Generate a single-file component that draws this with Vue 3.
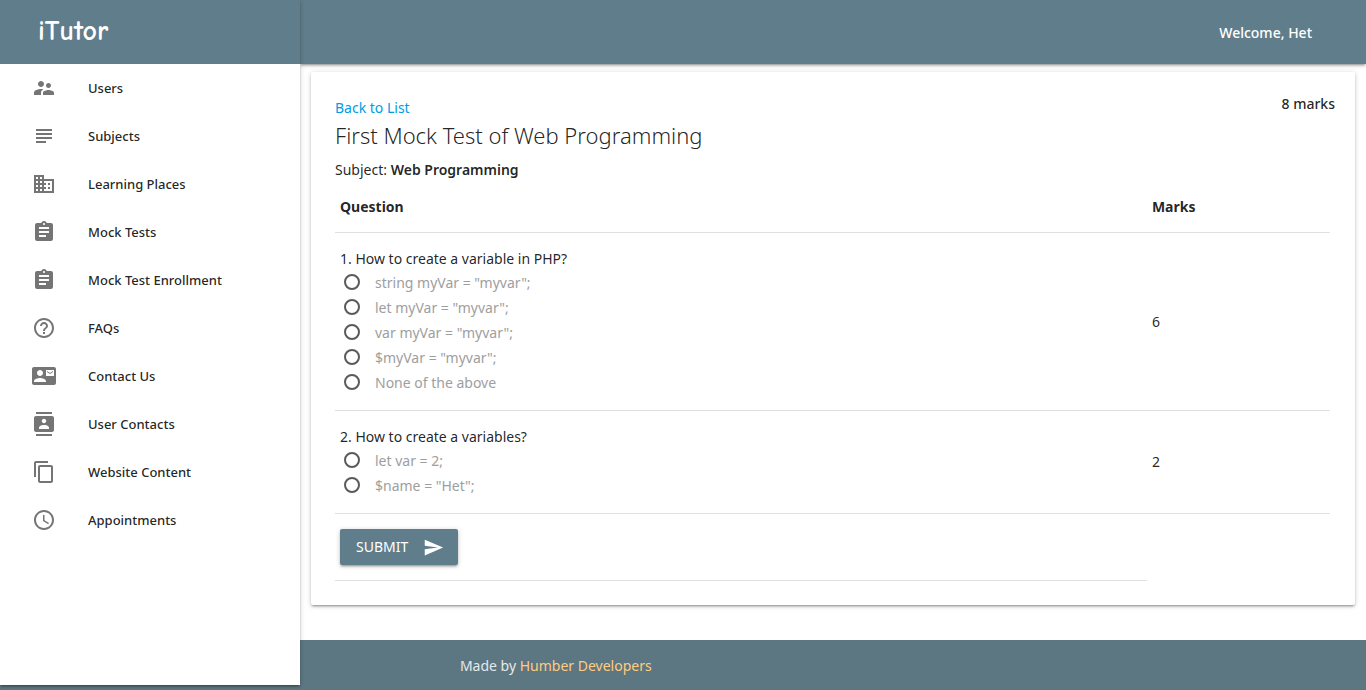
<script setup>
import { ref } from 'vue'

const clipboard =
  'M19 3h-4.18C14.4 1.84 13.3 1 12 1c-1.3 0-2.4.84-2.82 2H5c-1.1 0-2 .9-2 2v14c0 1.1.9 2 2 2h14c1.1 0 2-.9 2-2V5c0-1.1-.9-2-2-2zm-7 0c.55 0 1 .45 1 1s-.45 1-1 1-1-.45-1-1 .45-1 1-1zm2 14H7v-2h7v2zm3-4H7v-2h10v2zm0-4H7V7h10v2z'

const menu = [
  { label: 'Users', icon: 'M16.5 12c1.38 0 2.49-1.12 2.49-2.5S17.88 7 16.5 7C15.12 7 14 8.12 14 9.5s1.12 2.5 2.5 2.5zM9 11c1.66 0 2.99-1.34 2.99-3S10.66 5 9 5C7.34 5 6 6.34 6 8s1.34 3 3 3zm7.5 3c-1.83 0-5.5.92-5.5 2.75V19h11v-2.25c0-1.83-3.67-2.75-5.5-2.75zM9 13c-2.33 0-7 1.17-7 3.5V19h7v-2.25c0-.85.33-2.34 2.37-3.47C10.5 13.1 9.66 13 9 13z' },
  { label: 'Subjects', icon: 'M14 17H4v2h10v-2zm6-8H4v2h16V9zM4 15h16v-2H4v2zM4 5v2h16V5H4z' },
  { label: 'Learning Places', icon: 'M12 7V3H2v18h20V7H12zM6 19H4v-2h2v2zm0-4H4v-2h2v2zm0-4H4V9h2v2zm0-4H4V5h2v2zm4 12H8v-2h2v2zm0-4H8v-2h2v2zm0-4H8V9h2v2zm0-4H8V5h2v2zm10 12h-8v-2h2v-2h-2v-2h2v-2h-2V9h8v10zm-2-8h-2v2h2v-2zm0 4h-2v2h2v-2z' },
  { label: 'Mock Tests', icon: clipboard },
  { label: 'Mock Test Enrollment', icon: clipboard },
  { label: 'FAQs', icon: 'M11 18h2v-2h-2v2zm1-16C6.48 2 2 6.48 2 12s4.48 10 10 10 10-4.48 10-10S17.52 2 12 2zm0 18c-4.41 0-8-3.59-8-8s3.59-8 8-8 8 3.59 8 8-3.59 8-8 8zm0-14c-2.21 0-4 1.79-4 4h2c0-1.1.9-2 2-2s2 .9 2 2c0 2-3 1.75-3 5h2c0-2.25 3-2.5 3-5 0-2.21-1.79-4-4-4z' },
  { label: 'Contact Us', icon: 'M21 8V7l-3 2-3-2v1l3 2 3-2zm1-5H2C.9 3 0 3.9 0 5v14c0 1.1.9 2 2 2h20c1.1 0 1.99-.9 1.99-2L24 5c0-1.1-.9-2-2-2zM8 6c1.66 0 3 1.34 3 3s-1.34 3-3 3-3-1.34-3-3 1.34-3 3-3zm6 12H2v-1c0-2 4-3.1 6-3.1s6 1.1 6 3.1v1zm8-6h-8V6h8v6z' },
  { label: 'User Contacts', icon: 'M20 0H4v2h16V0zM4 24h16v-2H4v2zM20 4H4c-1.1 0-2 .9-2 2v12c0 1.1.9 2 2 2h16c1.1 0 2-.9 2-2V6c0-1.1-.9-2-2-2zm-8 2.75c1.24 0 2.25 1.01 2.25 2.25s-1.01 2.25-2.25 2.25S9.75 10.24 9.75 9 10.76 6.75 12 6.75zM17 17H7v-1.5c0-1.67 3.33-2.5 5-2.5s5 .83 5 2.5V17z' },
  { label: 'Website Content', icon: 'M16 1H4c-1.1 0-2 .9-2 2v14h2V3h12V1zm3 4H8c-1.1 0-2 .9-2 2v14c0 1.1.9 2 2 2h11c1.1 0 2-.9 2-2V7c0-1.1-.9-2-2-2zm0 16H8V7h11v14z' },
  { label: 'Appointments', icon: 'M11.99 2C6.47 2 2 6.48 2 12s4.47 10 9.99 10C17.52 22 22 17.52 22 12S17.52 2 11.99 2zM12 20c-4.42 0-8-3.58-8-8s3.58-8 8-8 8 3.58 8 8-3.58 8-8 8zm.5-13H11v6l5.25 3.15.75-1.23-4.5-2.67z' },
]

const questions = [
  {
    text: 'How to create a variable in PHP?',
    marks: 6,
    options: ['string myVar = "myvar";', 'let myVar = "myvar";', 'var myVar = "myvar";', '$myVar = "myvar";', 'None of the above'],
  },
  { text: 'How to create a variables?', marks: 2, options: ['let var = 2;', '$name = "Het";'] },
]

const answers = ref([null, null])
</script>

<template>
  <div class="app">
    <aside class="sidebar">
      <div class="brand"><a href="#" class="logo">iTutor</a></div>
      <nav>
        <a v-for="item in menu" :key="item.label" href="#" class="nav-item">
          <svg class="nav-icon" viewBox="0 0 24 24" aria-hidden="true"><path :d="item.icon" /></svg>
          <span>{{ item.label }}</span>
        </a>
      </nav>
    </aside>

    <div class="page">
      <header class="topbar"><span>Welcome, Het</span></header>

      <main class="content">
        <form class="card" @submit.prevent>
          <div class="card-head">
            <div>
              <a href="#" class="back">Back to List</a>
              <h1 class="title">First Mock Test of Web Programming</h1>
              <p class="subject">Subject: <strong>Web Programming</strong></p>
            </div>
            <span class="total">8 marks</span>
          </div>

          <table>
            <thead>
              <tr>
                <th scope="col">Question</th>
                <th scope="col" class="marks-col">Marks</th>
              </tr>
            </thead>
            <tbody>
              <tr v-for="(q, i) in questions" :key="i">
                <td>
                  <div :id="`question-${i}`">{{ i + 1 }}. {{ q.text }}</div>
                  <div role="radiogroup" :aria-labelledby="`question-${i}`">
                    <label v-for="(option, j) in q.options" :key="option" class="option">
                      <input v-model="answers[i]" type="radio" :name="`q${i}`" :value="j" />
                      <span>{{ option }}</span>
                    </label>
                  </div>
                </td>
                <td>{{ q.marks }}</td>
              </tr>
              <tr>
                <td>
                  <button type="submit" class="submit">
                    Submit
                    <svg viewBox="0 0 24 24" aria-hidden="true"><path d="M2.01 21L23 12 2.01 3 2 10l15 2-15 2z" /></svg>
                  </button>
                </td>
              </tr>
            </tbody>
          </table>
        </form>
      </main>

      <footer class="footer">Made by <a href="#">Humber Developers</a></footer>
    </div>
  </div>
</template>

<style>
body {
  margin: 0;
}
</style>

<style scoped>
.app {
  display: flex;
  min-height: 100vh;
  background: #5c7782;
  color: rgba(0, 0, 0, 0.87);
  font-family: 'Segoe UI', 'Noto Sans', 'Open Sans', sans-serif;
  font-size: 14px;
  line-height: 22px;
}

.app * {
  box-sizing: border-box;
}

a {
  text-decoration: none;
}

.sidebar {
  position: relative;
  z-index: 2;
  flex: none;
  width: 300px;
  margin-bottom: 5px;
  background: #fff;
  box-shadow: 0 2px 2px 0 rgba(0, 0, 0, 0.14), 0 3px 1px -2px rgba(0, 0, 0, 0.12), 0 1px 5px 0 rgba(0, 0, 0, 0.2);
}

.brand {
  display: flex;
  align-items: center;
  height: 64px;
  padding: 0 38px 2px;
  background: #607d8b;
}

.logo {
  color: #fff;
  font-family: 'Comic Neue', 'Comic Sans MS', 'Noto Sans', sans-serif;
  font-size: 28px;
  font-weight: 700;
  line-height: 32px;
}

.nav-item {
  display: flex;
  align-items: center;
  gap: 32px;
  height: 48px;
  padding: 0 32px;
  color: rgba(0, 0, 0, 0.87);
  font-size: 13px;
  font-weight: 500;
}

.nav-icon {
  width: 24px;
  height: 24px;
  fill: #757575;
}

.page {
  display: flex;
  flex: 1;
  flex-direction: column;
  min-width: 0;
  background: #fff;
}

.topbar {
  position: relative;
  z-index: 1;
  display: flex;
  align-items: center;
  justify-content: flex-end;
  height: 64px;
  padding: 2px 54px 0;
  background: #607d8b;
  color: #fff;
  font-weight: 500;
  box-shadow: 0 2px 2px 0 rgba(0, 0, 0, 0.14), 0 3px 1px -2px rgba(0, 0, 0, 0.12), 0 1px 5px 0 rgba(0, 0, 0, 0.2);
}

.content {
  flex: 1;
  padding: 8px 11px 24px;
}

.card {
  padding: 24px 25px 24px 24px;
  border-radius: 2px;
  background: #fff;
  box-shadow: 0 2px 2px 0 rgba(0, 0, 0, 0.14), 0 3px 1px -2px rgba(0, 0, 0, 0.12), 0 1px 5px 0 rgba(0, 0, 0, 0.2);
}

.card-head {
  display: flex;
  justify-content: space-between;
}

.back {
  display: block;
  color: #039be5;
  line-height: 24px;
}

.title {
  margin: 0 0 9px;
  font-size: 22px;
  font-weight: 300;
  line-height: 30px;
}

.subject {
  margin: 0;
}

.subject strong {
  font-weight: 600;
}

.total {
  margin: -3px -5px 0 0;
  font-weight: 500;
}

table {
  width: 100%;
  border-collapse: collapse;
  table-layout: fixed;
}

th,
td {
  padding: 15px 5px;
  border-bottom: 1px solid rgba(0, 0, 0, 0.12);
  text-align: left;
  vertical-align: middle;
}

th {
  padding-bottom: 14px;
  font-weight: 700;
}

.marks-col {
  width: 18.4%;
}

.option {
  display: flex;
  align-items: center;
  height: 25px;
  padding-left: 4px;
  gap: 15px;
  color: #9e9e9e;
}

.option input {
  width: 16px;
  height: 16px;
  margin: 0 0 2px;
  border: 2px solid #5a5a5a;
  border-radius: 50%;
  appearance: none;
}

.option input:checked {
  background: #607d8b;
}

.submit {
  display: flex;
  align-items: center;
  gap: 15px;
  height: 36px;
  padding: 0 14px 0 16px;
  border: 0;
  border-radius: 2px;
  background: #607d8b;
  color: #fff;
  font: inherit;
  text-transform: uppercase;
  box-shadow: 0 2px 2px 0 rgba(0, 0, 0, 0.14), 0 3px 1px -2px rgba(0, 0, 0, 0.12), 0 1px 5px 0 rgba(0, 0, 0, 0.2);
}

.submit svg {
  width: 21px;
  height: 21px;
  fill: #fff;
}

.footer {
  padding: 15px 15% 13px;
  background: #5c7782;
  color: #e4e9ea;
}

.footer a {
  color: #ffcc80;
}
</style>
